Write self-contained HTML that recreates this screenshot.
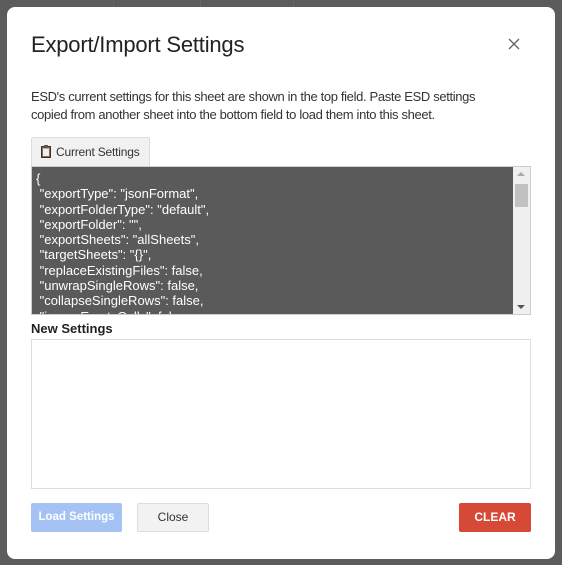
<!DOCTYPE html>
<html><head><style>
body{margin:0;width:562px;height:565px;background:#5c5c5c;position:relative;overflow:hidden;font-family:"Liberation Sans",Arial,sans-serif}
.grid{position:absolute;background:#666}
.dlg{position:absolute;left:7px;top:7px;width:548px;height:552px;background:#fff;border-radius:8px}
.abs{position:absolute}
.title{left:24px;top:25px;font-size:22px;color:#222;letter-spacing:-0.2px}
.x{left:501px;top:31px}
.desc{left:24px;top:81px;font-size:13px;line-height:18px;color:#333;width:480px;letter-spacing:-0.35px}
.btn1{left:24px;top:130px;width:119px;height:29px;background:#f1f1f1;border:1px solid #ddd;border-bottom:none;border-radius:2px 2px 0 0;font-size:12px;color:#333;line-height:29px;box-sizing:border-box;padding-left:24px;letter-spacing:-0.2px}
.code{left:24px;top:159px;width:500px;height:149px;background:#5a5a5a;border:1px solid #ccc;box-sizing:border-box;overflow:hidden;color:#fff;font-size:13px;line-height:15.3px;padding:4px 0 0 4px;white-space:pre;letter-spacing:0}
.sb{position:absolute;right:0;top:0;width:17px;height:147px;background:#f0f0f0}
.label{left:24px;top:314px;font-size:13px;font-weight:bold;color:#222}
.ta{left:24px;top:332px;width:500px;height:150px;border:1px solid #ddd;box-sizing:border-box}
.b{top:496px;height:29px;border-radius:2px;font-size:12px;font-weight:bold;text-align:center;line-height:29px;box-sizing:border-box}
</style></head><body>
<div class="grid" style="left:113px;top:0;width:1px;height:8px"></div>
<div class="grid" style="left:200px;top:0;width:1px;height:8px"></div>
<div class="grid" style="left:293px;top:0;width:1px;height:8px"></div>
<div class="dlg">
<div class="abs title">Export/Import Settings</div>
<svg class="abs x" width="12" height="12" viewBox="0 0 12 12"><path d="M1 1L11 11M11 1L1 11" stroke="#666" stroke-width="1.4"/></svg>
<div class="abs desc">ESD's current settings for this sheet are shown in the top field. Paste ESD settings copied from another sheet into the bottom field to load them into this sheet.</div>
<div class="abs btn1"><svg style="position:absolute;left:9px;top:7px" width="10" height="13" viewBox="0 0 10 13"><rect x="0.5" y="1.5" width="9" height="11" fill="#8a6a4a" stroke="#333"/><rect x="2" y="3.5" width="6" height="7.5" fill="#eee"/><rect x="3" y="0" width="4" height="3" fill="#555"/></svg>Current Settings</div>
<div class="abs code">{
 "exportType": "jsonFormat",
 "exportFolderType": "default",
 "exportFolder": "",
 "exportSheets": "allSheets",
 "targetSheets": "{}",
 "replaceExistingFiles": false,
 "unwrapSingleRows": false,
 "collapseSingleRows": false,
 "ignoreEmptyCells": false,<div class="sb"><div style="position:absolute;left:4px;top:5px;width:0;height:0;border-left:4px solid transparent;border-right:4px solid transparent;border-bottom:4px solid #aaa"></div><div style="position:absolute;left:2px;top:17px;width:13px;height:23px;background:#c1c1c1"></div><div style="position:absolute;left:4px;top:138px;width:0;height:0;border-left:4px solid transparent;border-right:4px solid transparent;border-top:4px solid #555"></div></div></div>
<div class="abs label">New Settings</div>
<div class="abs ta"></div>
<div class="abs b" style="left:24px;width:91px;background:#a4c2f4;color:#fff;font-size:11.5px">Load Settings</div>
<div class="abs b" style="left:130px;width:72px;background:#f2f2f2;border:1px solid #ddd;color:#333;font-weight:normal;line-height:27px">Close</div>
<div class="abs b" style="left:452px;width:72px;background:#d64937;color:#fff">CLEAR</div>
</div>
</body></html>
